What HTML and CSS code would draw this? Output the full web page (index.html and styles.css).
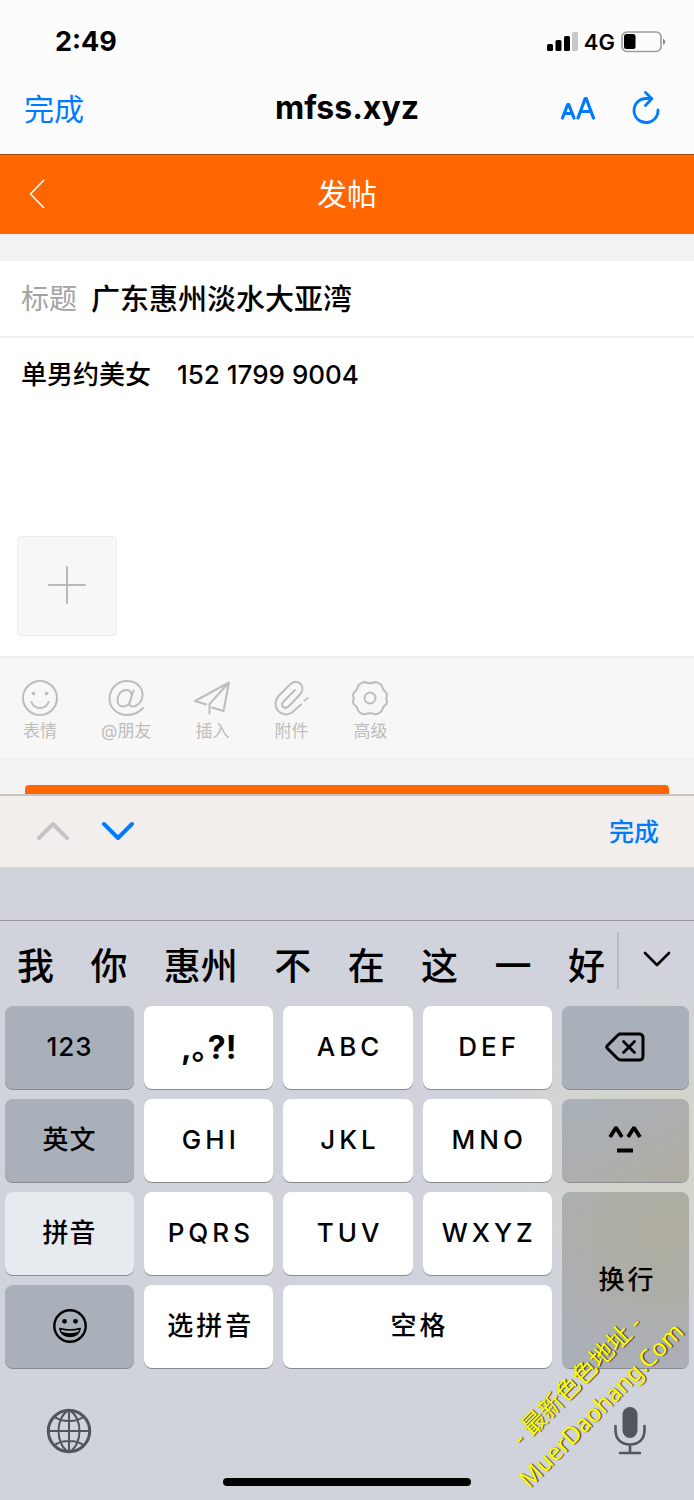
FILE: index.html
```html
<!DOCTYPE html>
<html lang="zh-CN">
<head>
<meta charset="utf-8">
<meta name="viewport" content="width=device-width, initial-scale=1">
<title>发帖</title>
<link rel="stylesheet" href="styles.css">
</head>
<body>
<div class="screen">
  <header class="browser">
    <div class="status">
      <span class="time">2:49</span>
      <div class="signals">
        <svg width="31" height="20" viewBox="0 0 31 20" aria-hidden="true">
          <rect x="0" y="12" width="6" height="7" rx="1.5"/>
          <rect x="8.500" y="8" width="6" height="11" rx="1.500"/>
          <rect x="17" y="4" width="6" height="15" rx="1.500"/>
          <rect x="25" y="0" width="6" height="19" rx="1.500" fill="#c8c8c8"/>
        </svg>
        <span class="network">4G</span>
        <svg width="45" height="22" viewBox="0 0 45 22" aria-hidden="true">
          <rect x="1" y="1" width="39" height="19.500" rx="5" fill="none" stroke="#9b9b9b" stroke-width="1.600"/>
          <rect x="3" y="3" width="11.500" height="15" rx="2.500"/>
          <path d="M42 7.500c3 1.500 3 5 0 6.500z" fill="#8e8e8e"/>
        </svg>
      </div>
    </div>
    <nav class="bar">
      <button class="done" type="button">完成</button>
      <span class="site">mfss.xyz</span>
      <div class="bar-tools">
        <button class="tool" type="button" aria-label="文字大小">
          <svg width="36" height="26" viewBox="0 0 36 26" fill="none" stroke="#007aff" stroke-width="3.200" stroke-linecap="round" stroke-linejoin="round">
            <path d="M2.500 23L7.700 9.500h1L14 23M4.500 18.500h7.500"/>
            <path d="M18 23L25.200 3.500h1L33.500 23M20.500 16.500h10.500"/>
          </svg>
        </button>
        <button class="tool" type="button" aria-label="刷新">
          <svg width="28" height="34" viewBox="0 0 28 34" fill="none" stroke="#007aff" stroke-width="2.800" stroke-linecap="round" stroke-linejoin="round">
            <path d="M26 19A12 12 0 1 1 14 7.500h5.500"/>
            <path d="M13.500 1.500L19.800 7.800L13.500 14.500"/>
          </svg>
        </button>
      </div>
    </nav>
  </header>

  <main class="page">
    <div class="page-head">
      <button class="back" type="button" aria-label="返回">
        <svg width="16" height="30" viewBox="0 0 16 30" fill="none" stroke="#fff" stroke-width="1.600"><path d="M15 1L1.500 15L15 29"/></svg>
      </button>
      <h1 class="page-title">发帖</h1>
      <span></span>
    </div>
    <form class="post">
      <div class="title-row">
        <label for="subject">标题</label>
        <input class="subject" id="subject" type="text" value="广东惠州淡水大亚湾">
      </div>
      <div class="content">
        <textarea class="message" aria-label="内容">单男约美女　152 1799 9004</textarea>
        <button class="upload" type="button" aria-label="添加图片">
          <svg width="38" height="38" viewBox="0 0 38 38" stroke="#b9b9b9" stroke-width="2" stroke-linecap="round"><path d="M19 1v36M1 19h36"/></svg>
        </button>
      </div>
      <div class="extras">
        <button class="extra" type="button">
          <svg viewBox="0 0 36 36"><circle cx="18" cy="18" r="17"/><circle class="dot" cx="11.500" cy="13.500" r="1.800"/><circle class="dot" cx="24.500" cy="13.500" r="1.800"/><path d="M9.500 22c3 8 14 8 17 0"/></svg>
          <span>表情</span>
        </button>
        <button class="extra" type="button">
          <svg viewBox="0 0 36 36"><path d="M35 28C31 32.500 26 35 19 35C9 35 1.500 28 1.500 18.500S9 1 19 1C28 1 34.500 7 34.500 14.500C34.500 22 29 26.500 24.500 26.500C21 26.500 21 24.500 22 21L25.500 10.500M24 15C23 11.500 21 10 18.500 10C13 10 9.500 15 9.500 20C9.500 24 12 26.500 15 26.500C19 26.500 22 23 23 19"/></svg>
          <span>@朋友</span>
        </button>
        <button class="extra" type="button">
          <svg viewBox="0 0 36 36"><path d="M12 24.500L1 21L35 2.500L29.500 31L18 27.500M35 2.500L15.500 24V33.500"/></svg>
          <span>插入</span>
        </button>
        <button class="extra" type="button">
          <svg viewBox="0 0 36 36"><path d="M22 10L10.500 21.500C6.500 25.500 11.500 30 15.500 26.500L27 14.500C33.500 7 25.500-2.500 17.500 4L5.500 16C-3 26 8 39.500 19 32.500L28 24.500M31.500 20.500l.500-.500M34 18.500l.500-.500"/></svg>
          <span>附件</span>
        </button>
        <button class="extra" type="button">
          <svg viewBox="0 0 36 36"><path d="M12.500 2Q18 4.500 23.500 2Q28 3 30 6Q30.500 10 34 12.500Q36 15 34 18.500Q36 21 34 24.500Q30.500 26.500 30 30.500Q28 33.500 23.500 34.500Q18 32 12.500 34.500Q8 33.500 6 30.500Q5.500 26.500 2 24.500Q0 21 2 18.500Q0 15 2 12.500Q5.500 10 6 6Q8 3 12.500 2Z"/><circle cx="18" cy="18" r="5.500"/></svg>
          <span>高级</span>
        </button>
      </div>
      <div class="send">
        <button class="submit" type="submit" aria-label="发表"></button>
      </div>
    </form>
  </main>

  <section class="keyboard" aria-label="键盘">
    <div class="accessory">
      <div class="steps">
        <button type="button" aria-label="上一个" disabled>
          <svg width="34" height="20" viewBox="0 0 34 20" fill="none" stroke="#c5c4c4" stroke-width="4" stroke-linecap="round" stroke-linejoin="round"><path d="M3 17L17 3L31 17"/></svg>
        </button>
        <button type="button" aria-label="下一个">
          <svg width="34" height="20" viewBox="0 0 34 20" fill="none" stroke="#007aff" stroke-width="4" stroke-linecap="round" stroke-linejoin="round"><path d="M3 3L17 17L31 3"/></svg>
        </button>
      </div>
      <button class="finish" type="button">完成</button>
    </div>
    <div class="spacer"></div>
    <div class="candidates">
      <div class="words">
        <button type="button">我</button><button type="button">你</button><button type="button">惠州</button><button type="button">不</button><button type="button">在</button><button type="button">这</button><button type="button">一</button><button type="button">好</button>
      </div>
      <button class="expand" type="button" aria-label="展开">
        <svg width="28" height="17" viewBox="0 0 28 17" fill="none" stroke="#000" stroke-width="2.600" stroke-linecap="round" stroke-linejoin="round"><path d="M2 2L14 14L26 2"/></svg>
      </button>
    </div>
    <div class="keys">
      <button class="key dark plain" type="button">123</button>
      <button class="key punct" type="button">,｡?!</button>
      <button class="key" type="button">ABC</button>
      <button class="key" type="button">DEF</button>
      <button class="key dark plain" type="button" aria-label="删除">
        <svg width="40" height="30" viewBox="0 0 40 30" fill="none" stroke="#000" stroke-linecap="round" stroke-linejoin="round"><path stroke-width="3" d="M14 2H34Q38 2 38 6V24Q38 28 34 28H16Q14 28 12.500 26.500L2.500 16.500Q1 15 2.500 13.500L12.500 3.500Q14 2 16 2"/><path stroke-width="2.800" d="M18.500 9.500L29.500 20.500M29.500 9.500L18.500 20.500"/></svg>
      </button>
      <button class="key dark plain cjk" type="button">英文</button>
      <button class="key" type="button">GHI</button>
      <button class="key" type="button">JKL</button>
      <button class="key" type="button">MNO</button>
      <button class="key dark tint plain" type="button" aria-label="表情符号">
        <svg width="34" height="30" viewBox="0 0 34 30" fill="none" stroke="#000" stroke-width="3.800"><path d="M2 12L7.500 3.500H8.500L14 12M20 12L25.500 3.500H26.500L32 12M9 25.500H25"/></svg>
      </button>
      <button class="key light plain cjk" type="button">拼音</button>
      <button class="key" type="button">PQRS</button>
      <button class="key" type="button">TUV</button>
      <button class="key" type="button">WXYZ</button>
      <button class="key return cjk" type="button">换行</button>
      <button class="key dark plain" type="button" aria-label="表情">
        <svg width="34" height="34" viewBox="0 0 34 34"><circle cx="17" cy="17" r="15.700" fill="none" stroke="#000" stroke-width="2.400"/><circle cx="11.500" cy="12.300" r="2.400"/><circle cx="22.500" cy="12.300" r="2.400"/><path fill="none" stroke="#000" stroke-width="1.500" stroke-linejoin="round" d="M6.800 19.500Q17 22.500 27.200 19.500Q26 27.500 17 27.500T6.800 19.500Z"/><path d="M8 22.500Q17 26 26 22.500Q24 27.500 17 27.500T8 22.500Z"/></svg>
      </button>
      <button class="key cjk" type="button">选拼音</button>
      <button class="key space cjk" type="button">空格</button>
    </div>
    <div class="dock">
      <button type="button" aria-label="切换键盘">
        <svg width="46" height="46" viewBox="0 0 46 46" fill="none" stroke="#50555e" stroke-width="2"><circle cx="23" cy="23" r="20.700" stroke-width="3"/><path d="M23 2v42M2 23h42M23 2C9 9 9 37 23 44C37 37 37 9 23 2M8 8.500C15 14.500 31 14.500 38 8.500M8 37.500C15 31.500 31 31.500 38 37.500"/></svg>
      </button>
      <button type="button" aria-label="听写">
        <svg width="32" height="48" viewBox="0 0 32 48" fill="none" stroke="#50555e" stroke-width="2.600" stroke-linecap="round"><rect x="8.500" y="0" width="15" height="31" rx="7.500" fill="#50555e" stroke="none"/><path d="M1.500 19V23C1.500 32 7 37.500 16 37.500S30.500 32 30.500 23V19M16 38V46M6 46H26"/></svg>
      </button>
    </div>
    <div class="home"></div>
  </section>

  <div class="watermark"><span>- 最新色色地址 -</span><span>MuerDaohang.Com</span></div>
</div>
</body>
</html>
```
FILE: styles.css
```css
* {
  box-sizing: border-box;
}

body {
  margin: 0;
  background: #d0d3db;
  color: #000;
  font-family: Inter, "Noto Sans CJK SC", sans-serif;
}

button,
input,
textarea {
  margin: 0;
  padding: 0;
  border: 0;
  background: none;
  color: inherit;
  font: inherit;
}

svg {
  display: block;
  flex: none;
}

.screen {
  position: relative;
  overflow: hidden;
}

/* Browser chrome */
.browser {
  background: #fcfcfc;
  border-bottom: 1px solid #a64b0d;
}

.status {
  display: flex;
  align-items: center;
  justify-content: space-between;
  height: 64px;
  padding: 19px 28px 0 55px;
}

.time {
  font-size: 27px;
  font-weight: 700;
}

.signals {
  display: flex;
  align-items: center;
  gap: 6px;
}

.network {
  font-size: 22px;
  font-weight: 600;
}

.bar {
  display: grid;
  grid-template-columns: 1fr auto 1fr;
  align-items: center;
  height: 90px;
  padding: 0 24px 3px;
}

.done {
  justify-self: start;
  padding-bottom: 2px;
  color: #007aff;
  font-size: 30px;
}

.site {
  font-size: 32px;
  font-weight: 700;
}

.bar-tools {
  display: flex;
  align-items: center;
  justify-content: flex-end;
  gap: 36px;
  padding-right: 10px;
}

/* Posting page */
.page {
  background: #f2f2f2;
}

.page-head {
  display: grid;
  grid-template-columns: 1fr auto 1fr;
  align-items: center;
  height: 79px;
  padding: 0 29px 2px;
  background: #ff6600;
  color: #fff;
}

.back {
  justify-self: start;
}

.page-title {
  margin: 0;
  padding-bottom: 4px;
  font-size: 30px;
  font-weight: 400;
}

.post {
  padding-top: 27px;
}

.title-row {
  display: flex;
  align-items: center;
  gap: 14px;
  height: 77px;
  padding: 0 21px 4px;
  border-bottom: 2px solid #efefef;
  background: #fff;
  font-size: 28px;
}

.title-row label {
  color: #a3a3a3;
}

.subject {
  flex: 1;
  min-width: 0;
  height: 60px;
  font-size: 29px;
  font-weight: 500;
}

.content {
  padding: 16px 17px 20px;
  border-bottom: 2px solid #efefef;
  background: #fff;
}

.message {
  display: block;
  width: 100%;
  height: 182px;
  padding: 0 4px;
  resize: none;
  font-size: 26px;
  font-weight: 500;
  line-height: 42px;
}

.upload {
  display: grid;
  place-items: center;
  width: 100px;
  height: 100px;
  padding-bottom: 2px;
  border: 1px solid #ececec;
  border-radius: 4px;
  background: #f7f7f7;
}

.extras {
  display: flex;
  gap: 43px;
  height: 101px;
  padding: 22px 22px 10px;
  border-bottom: 1px solid #efefef;
  background: #f7f7f7;
  color: #bdbdbd;
  font-size: 17px;
}

.extra {
  display: flex;
  flex-direction: column;
  align-items: center;
  gap: 2px;
  line-height: 26px;
}

.extra svg {
  width: 36px;
  height: 36px;
  fill: none;
  stroke: #bdbdbd;
  stroke-width: 2;
  stroke-linecap: round;
  stroke-linejoin: round;
}

.extra .dot {
  fill: #bdbdbd;
  stroke: none;
}

.send {
  height: 35px;
  padding: 26px 25px 0;
  overflow: hidden;
}

.submit {
  display: block;
  width: 100%;
  height: 80px;
  border-radius: 4px;
  background: #ff6600;
}

/* On-screen keyboard */
.keyboard {
  background: radial-gradient(circle at 94% 51%, #d5d4c6 0, #d3d4d2 100px, #d0d3db 170px);
}

.accessory {
  display: flex;
  align-items: center;
  justify-content: space-between;
  height: 73px;
  padding: 0 35px 2px 36px;
  border-top: 2px solid #c8c3c2;
  background: #f2eeec;
}

.steps {
  display: flex;
  gap: 31px;
}

.finish {
  padding-bottom: 2px;
  color: #007aff;
  font-size: 25px;
  font-weight: 500;
}

.spacer {
  height: 54px;
  border-bottom: 1px solid #98989c;
}

.candidates {
  display: flex;
  align-items: flex-start;
  height: 85px;
  padding-top: 11px;
}

.words {
  display: flex;
  flex: 1;
  justify-content: space-between;
  padding: 8px 12px 0 17px;
  font-size: 37px;
  font-weight: 500;
  line-height: 54px;
}

.expand {
  display: grid;
  place-items: center;
  width: 77px;
  height: 57px;
  padding-bottom: 3px;
  border-left: 2px solid #b9bbc1;
}

.keys {
  display: grid;
  grid-template-columns: repeat(4, 129fr) 127fr;
  grid-auto-rows: 83px;
  gap: 10px;
  padding: 0 5px;
}

.key {
  display: grid;
  place-items: center;
  padding: 0 0 2px 4px;
  border-radius: 8px;
  background: #fff;
  box-shadow: 0 1px 0 #898a8d;
  font-size: 26px;
  font-weight: 500;
  letter-spacing: 4px;
}

.cjk {
  padding-bottom: 6px;
  letter-spacing: 3px;
}

.plain {
  padding-left: 0;
  letter-spacing: 1px;
}

.punct {
  padding: 0 0 6px;
  font-size: 32px;
  font-weight: 700;
  letter-spacing: 0;
}

.dark {
  background: #a9b0ba;
}

.tint {
  background: linear-gradient(150deg, #a9b0ba, #acaeaf 50%, #b0ada1);
}

.light {
  background: #e7eaef;
}

.return {
  grid-column: 5;
  grid-row: 3 / span 2;
  background: radial-gradient(circle at 80% 22%, #afad9f 0, #aeaea8 70px, #acafb3 110px, #a9b0ba 170px);
}

.space {
  grid-column: span 2;
}

.dock {
  display: flex;
  align-items: center;
  justify-content: space-between;
  height: 110px;
  padding: 16px 48px 0 46px;
}

.home {
  width: 248px;
  height: 8px;
  margin: 0 auto 14px;
  border-radius: 4px;
  background: #000;
}

/* Diagonal site mark over the lower right corner */
.watermark {
  position: absolute;
  right: -14px;
  bottom: 73px;
  width: 240px;
  color: #ff0;
  font-family: "Noto Sans", "Noto Sans CJK SC", sans-serif;
  font-size: 24px;
  line-height: 35px;
  text-align: center;
  text-shadow: 1px 1px 1px #333;
  transform: rotate(-45deg);
  pointer-events: none;
}

.watermark span {
  display: block;
  white-space: nowrap;
}
```
